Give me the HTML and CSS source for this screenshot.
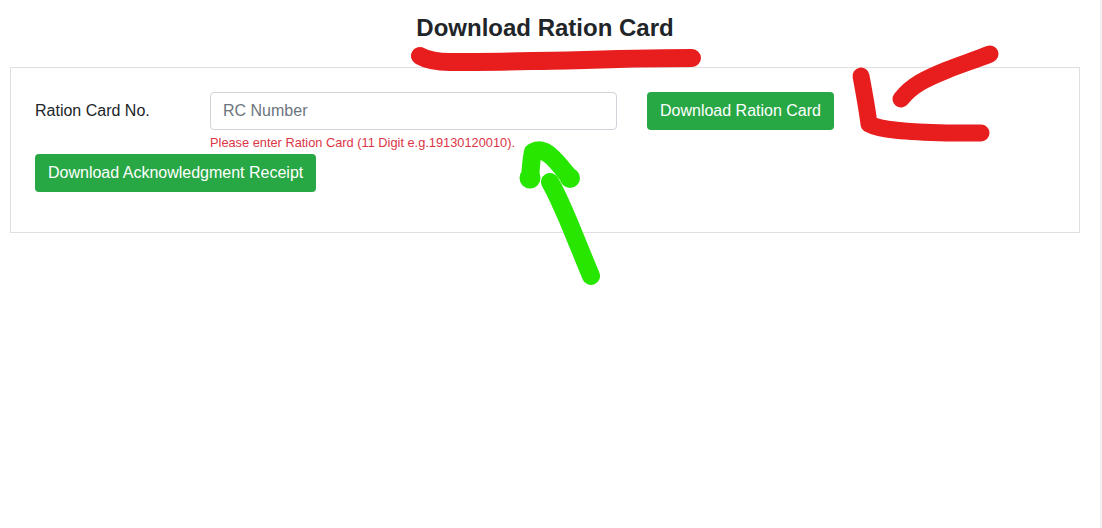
FILE: index.html
```html
<!DOCTYPE html>
<html lang="en">
<head>
    <meta charset="UTF-8">
    <meta name="viewport" content="width=device-width, initial-scale=1.0">
    <title>Download Ration Card</title>
    <link rel="stylesheet" href="styles.css">
</head>
<body>
    <div class="page">
        <div class="container">
            <h1 class="title">Download Ration Card</h1>

            <div class="card">
                <div class="form-row">
                    <label class="form-label" for="rcNumber">Ration Card No.</label>
                    <div class="form-field">
                        <input type="text" class="form-input" id="rcNumber" placeholder="RC Number">
                        <div class="form-error">Please enter Ration Card (11 Digit e.g.19130120010).</div>
                    </div>
                    <button class="btn btn-row">Download Ration Card</button>
                </div>
                <button class="btn">Download Acknowledgment Receipt</button>
            </div>
        </div>
        <div class="scrollbar"></div>
    </div>

    <!-- hand drawn marks on top of the screenshot -->
    <svg class="marks" width="1102" height="528" viewBox="0 0 1102 528" fill="none" stroke-linecap="round" stroke-linejoin="round">
        <path class="mark-red mark-wide" d="M420 56 C427 60 436 62 450 62 C490 62 530 61 567 60.5 C610 59 650 58 692 58"/>
        <path class="mark-red" d="M990 54 C975 60 962 64 947 70 C925 79 912 85 901 99"/>
        <path class="mark-red" d="M861 76 C864 92 867 108 869 124 C880 130 905 132 947 133 L981 133"/>
        <path class="mark-green mark-wide" d="M591 276 L568 220 C561 204 556 192 550 182"/>
        <path class="mark-green mark-wide" d="M530 178 C531 168 531 160 533 152 C540 148 546 151 553 158 C560 165 565 172 570 178"/>
        <circle class="dot-green" cx="530" cy="178" r="10.5"/>
        <circle class="dot-green" cx="570" cy="178" r="10"/>
    </svg>
</body>
</html>
```

FILE: styles.css
```css
* {
    margin: 0;
    padding: 0;
    box-sizing: border-box;
}

body {
    font-family: "Liberation Sans", Arial, sans-serif;
    font-size: 16px;
    line-height: 1.5;
    color: #212529;
    background: #ffffff;
    overflow: hidden;
}

.page {
    display: flex;
    height: 528px;
}

.container {
    flex: 1;
    padding: 14px 20px 0 10px;
}

.scrollbar {
    width: 2px;
    background: #f1f1f1;
}

.title {
    font-size: 24px;
    font-weight: bold;
    line-height: 1.2;
    text-align: center;
    margin-bottom: 24px;
}

.card {
    border: 1px solid #dfdfdf;
    padding: 24px 24px 40px;
}

.form-row {
    display: flex;
    align-items: flex-start;
}

.form-label {
    width: 175px;
    line-height: 38px;
}

.form-field {
    width: 407px;
    margin-right: 30px;
}

.form-input {
    display: block;
    width: 100%;
    height: 38px;
    padding: 6px 12px;
    border: 1px solid #ced4da;
    border-radius: 4px;
    font-family: inherit;
    font-size: 16px;
    color: #495057;
}

.form-input::placeholder {
    color: #6c757d;
    opacity: 1;
}

.form-error {
    height: 24px;
    font-size: 12.8px;
    line-height: 26px;
    color: #dc3545;
    white-space: nowrap;
}

.btn {
    display: block;
    height: 38px;
    padding: 0 13px;
    border: none;
    border-radius: 4px;
    background: #28a745;
    color: #ffffff;
    font-family: inherit;
    font-size: 16px;
}

.marks {
    position: absolute;
    top: 0;
    left: 0;
    pointer-events: none;
}

.mark-red {
    stroke: #e81e1e;
    stroke-width: 17;
}

.mark-green {
    stroke: #27e600;
    stroke-width: 16;
}

.mark-wide {
    stroke-width: 18;
}

.dot-green {
    fill: #27e600;
}
```
